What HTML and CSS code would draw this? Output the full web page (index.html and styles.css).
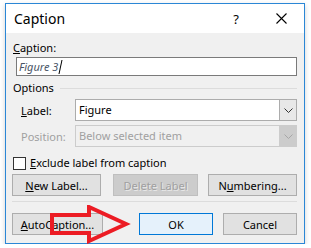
FILE: index.html
```html
<!DOCTYPE html>
<html lang="en">
<head>
    <meta charset="UTF-8">
    <title>Caption</title>
    <link rel="stylesheet" href="styles.css">
</head>
<body>
    <div class="dialog">
        <div class="titlebar">
            <span class="title">Caption</span>
            <span class="help">?</span>
            <svg class="close" width="11" height="11" viewBox="0 0 11 11">
                <path d="M0.5 0.5 L10.5 10.5 M10.5 0.5 L0.5 10.5" stroke="#000" stroke-width="1.1" fill="none"/>
            </svg>
        </div>

        <div class="content">
            <div class="field-label"><u>C</u>aption:</div>
            <div class="caption-input">
                <span class="caption-text">Figure 3</span><span class="caret"></span>
            </div>

            <div class="group-title">
                <span>Options</span>
                <span class="group-line"></span>
            </div>

            <div class="option-row">
                <span class="option-label"><u>L</u>abel:</span>
                <div class="combo">
                    <span class="combo-value">Figure</span>
                    <span class="combo-btn">
                        <svg width="9" height="5" viewBox="0 0 9 5"><path d="M0.5 0.5 L4.5 4.5 L8.5 0.5" stroke="#333" fill="none"/></svg>
                    </span>
                </div>
            </div>
            <div class="option-row second disabled">
                <span class="option-label">Position:</span>
                <div class="combo">
                    <span class="combo-value">Below selected item</span>
                    <span class="combo-btn">
                        <svg width="9" height="5" viewBox="0 0 9 5"><path d="M0.5 0.5 L4.5 4.5 L8.5 0.5" stroke="#a6a6a6" fill="none"/></svg>
                    </span>
                </div>
            </div>

            <label class="check-row">
                <span class="checkbox"></span>
                <span><u>E</u>xclude label from caption</span>
            </label>

            <div class="button-row">
                <button class="btn wide"><u>N</u>ew Label...</button>
                <button class="btn mid" disabled>Delete Label</button>
                <button class="btn wide">N<u>u</u>mbering...</button>
            </div>

            <div class="separator"></div>

            <div class="footer">
                <button class="btn auto"><u>A</u>utoCaption...</button>
                <div class="footer-right">
                    <button class="btn small default">OK</button>
                    <button class="btn small">Cancel</button>
                </div>
            </div>
        </div>

        <svg class="arrow" width="90" height="45" viewBox="0 0 90 45">
            <polygon points="3,10 40,10 40,2 77,19 40,36 40,28 3,28" fill="none" stroke="#ec1c24" stroke-width="4" stroke-linejoin="miter"/>
        </svg>
    </div>
</body>
</html>
```

FILE: styles.css
```css
body {
    margin: 0;
    background-color: #fff;
    font-family: "Noto Sans", "Open Sans", sans-serif;
    font-size: 11px;
    color: #000;
}

.dialog {
    position: relative;
    margin: 3px 0 0 5px;
    width: 300px;
    height: 241px;
    box-sizing: border-box;
    border: 1px solid #2b87d6;
    background-color: #f0f0f0;
    box-shadow: 0 2px 5px rgba(0, 0, 0, 0.18);
}

.titlebar {
    display: flex;
    align-items: center;
    height: 29px;
    background-color: #fff;
    padding-left: 8px;
}

.title {
    font-size: 14px;
    flex: 1;
}

.help {
    font-size: 13px;
    margin-right: 37px;
}

.close {
    margin-right: 17px;
}

.content {
    padding: 7px 7px 0 6px;
}

.field-label {
    line-height: 16px;
    padding-left: 1px;
}

.caption-input {
    display: flex;
    align-items: center;
    height: 19px;
    margin: 1px 0 0 4px;
    box-sizing: border-box;
    border: 1px solid #7a7a7a;
    background-color: #fff;
    padding-left: 2px;
}

.caption-text {
    font-style: italic;
    color: #4a5566;
}

.caret {
    width: 1px;
    height: 14px;
    margin-left: 2px;
    background-color: #000;
    transform: skewX(-12deg);
}

.group-title {
    display: flex;
    align-items: center;
    gap: 6px;
    margin-top: 4px;
    line-height: 16px;
    padding-left: 1px;
}

.group-line {
    flex: 1;
    height: 1px;
    background-color: #dcdcdc;
}

.option-row {
    display: flex;
    align-items: center;
    margin-top: 3px;
    padding-left: 9px;
}

.option-row.second {
    margin-top: 4px;
}

.option-label {
    width: 54px;
}

.combo {
    flex: 1;
    display: flex;
    height: 22px;
    box-sizing: border-box;
    border: 1px solid #acacac;
    background-color: #fff;
}

.combo-value {
    flex: 1;
    line-height: 20px;
    padding-left: 3px;
}

.combo-btn {
    display: flex;
    align-items: center;
    justify-content: center;
    width: 16px;
    border-left: 1px solid #acacac;
    background-color: #e8e8e8;
}

.disabled .option-label,
.disabled .combo-value {
    color: #a0a0a0;
}

.disabled .combo {
    border-color: #cccccc;
    background-color: #f0f0f0;
}

.disabled .combo-btn {
    border-left-color: #cccccc;
    background-color: #cccccc;
}

.check-row {
    display: flex;
    align-items: center;
    gap: 4px;
    margin-top: 8px;
    line-height: 16px;
    padding-left: 1px;
}

.checkbox {
    width: 13px;
    height: 13px;
    box-sizing: border-box;
    border: 1px solid #333;
    background-color: #fff;
}

.button-row {
    display: flex;
    justify-content: space-between;
    margin-top: 3px;
}

.btn {
    height: 22px;
    padding: 0;
    box-sizing: border-box;
    border: 1px solid #adadad;
    background-color: #e1e1e1;
    font-family: inherit;
    font-size: 11px;
    color: #000;
}

.btn.wide {
    width: 89px;
}

.btn.mid {
    width: 85px;
    margin-left: 2px;
}

.btn:disabled {
    border-color: #bfbfbf;
    background-color: #cccccc;
    color: #a0a0a0;
    text-shadow: 1px 1px 0 #e8e8e8;
}

.separator {
    height: 1px;
    margin-top: 5px;
    background-color: #dcdcdc;
}

.footer {
    display: flex;
    justify-content: space-between;
    margin-top: 11px;
}

.footer-right {
    display: flex;
    gap: 10px;
}

.btn.auto {
    width: 91px;
}

.btn.small {
    width: 74px;
}

.btn.default {
    border-color: #0078d7;
    background-color: #e5f1fb;
}

.arrow {
    position: absolute;
    left: 43px;
    top: 201px;
}
```
